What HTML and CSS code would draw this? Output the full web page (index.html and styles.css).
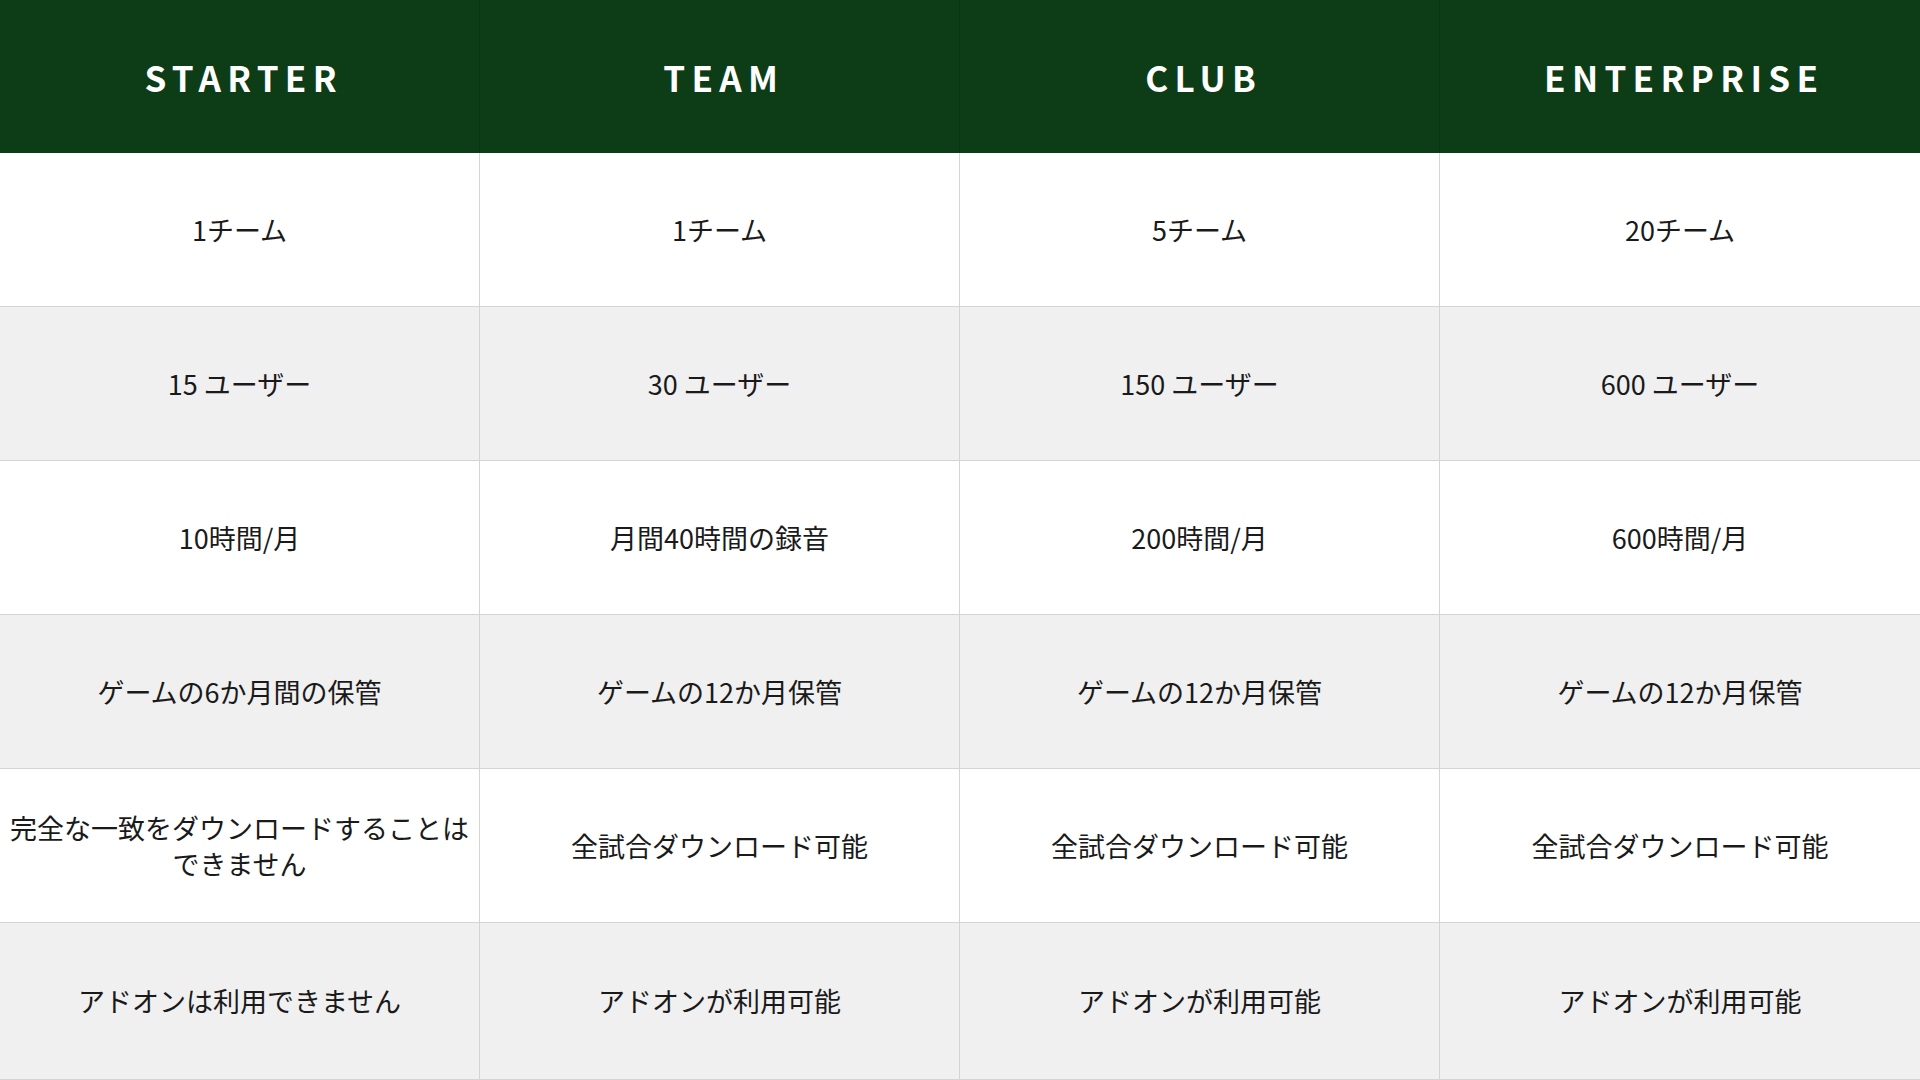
FILE: index.html
```html
<!DOCTYPE html>
<html lang="ja">
<head>
<meta charset="utf-8">
<title>Plans</title>
<link rel="stylesheet" href="styles.css">
</head>
<body>
<div class="plans">
  <div class="cell head">STARTER</div>
  <div class="cell head">TEAM</div>
  <div class="cell head">CLUB</div>
  <div class="cell head">ENTERPRISE</div>

  <div class="cell">1チーム</div>
  <div class="cell">1チーム</div>
  <div class="cell">5チーム</div>
  <div class="cell">20チーム</div>

  <div class="cell alt">15 ユーザー</div>
  <div class="cell alt">30 ユーザー</div>
  <div class="cell alt">150 ユーザー</div>
  <div class="cell alt">600 ユーザー</div>

  <div class="cell">10時間/月</div>
  <div class="cell">月間40時間の録音</div>
  <div class="cell">200時間/月</div>
  <div class="cell">600時間/月</div>

  <div class="cell alt">ゲームの6か月間の保管</div>
  <div class="cell alt">ゲームの12か月保管</div>
  <div class="cell alt">ゲームの12か月保管</div>
  <div class="cell alt">ゲームの12か月保管</div>

  <div class="cell">完全な一致をダウンロードすることはできません</div>
  <div class="cell">全試合ダウンロード可能</div>
  <div class="cell">全試合ダウンロード可能</div>
  <div class="cell">全試合ダウンロード可能</div>

  <div class="cell alt">アドオンは利用できません</div>
  <div class="cell alt">アドオンが利用可能</div>
  <div class="cell alt">アドオンが利用可能</div>
  <div class="cell alt">アドオンが利用可能</div>
</div>
</body>
</html>
```

FILE: styles.css
```css
html, body {
  margin: 0;
  padding: 0;
  background: #ffffff;
}

body {
  font-family: "Noto Sans CJK JP", "Noto Sans", sans-serif;
  color: #1a1a1a;
}

.plans {
  display: grid;
  grid-template-columns: repeat(4, 1fr);
  grid-template-rows: 153px repeat(5, 154px) 1fr;
  width: 1920px;
  height: 1080px;
  box-sizing: border-box;
}

.cell {
  display: flex;
  align-items: center;
  justify-content: center;
  text-align: center;
  padding: 0 10px;
  font-size: 27px;
  line-height: 36px;
  background: #ffffff;
  border-right: 1px solid #d4d4d4;
  border-bottom: 1px solid #d4d4d4;
  box-sizing: border-box;
}

.cell:nth-child(4n) {
  border-right: none;
}

.cell.alt {
  background: #f0f0f0;
}

.cell.head {
  background: #0c3d17;
  color: #ffffff;
  font-size: 35px;
  font-weight: 700;
  letter-spacing: 0.18em;
  padding: 1px 0 0 calc(0.18em + 2px);
  border-right-color: #0a3614;
  border-bottom-color: #0c3d17;
}
```
